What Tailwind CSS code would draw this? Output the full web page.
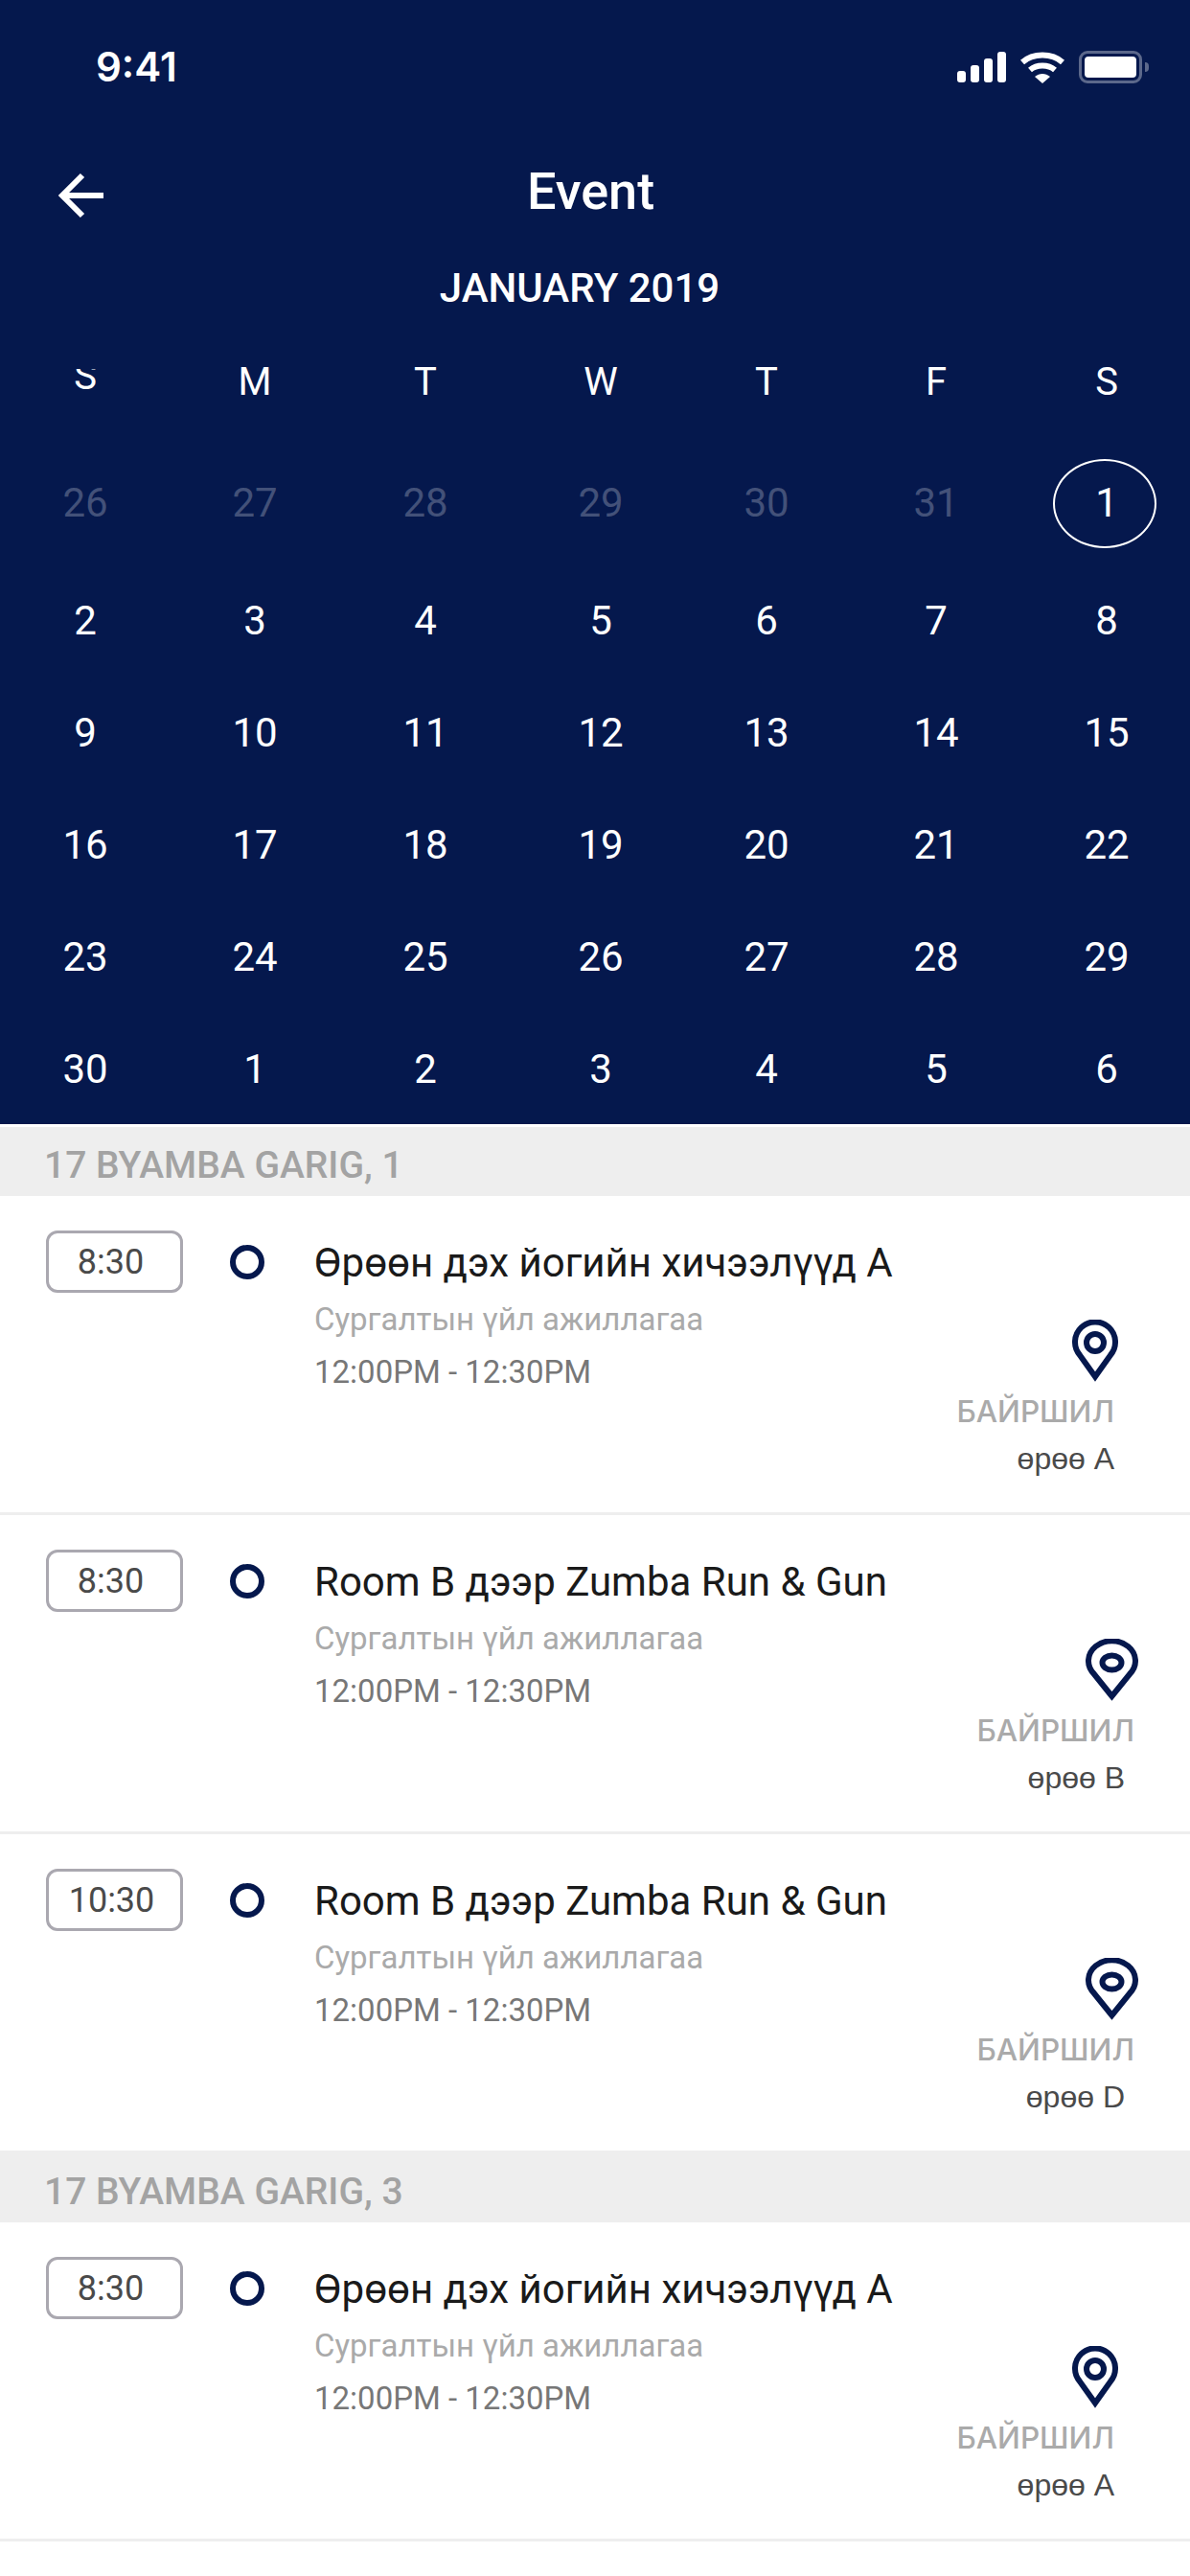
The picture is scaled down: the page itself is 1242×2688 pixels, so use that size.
<!DOCTYPE html>
<html lang="en">
<head>
    <meta charset="UTF-8">
    <meta name="viewport" content="width=device-width, initial-scale=1.0">
    <title>Event</title>
    <script src="https://cdn.jsdelivr.net/npm/@tailwindcss/browser@4"></script>
</head>
<body class="bg-white font-['Roboto',sans-serif]">
<div class="w-[1242px] h-[2688px] overflow-hidden">
    <header class="bg-[#05184d] h-[1173px] text-white">
        <div class="flex items-center justify-between h-[140px] pl-[100px] pr-[43px]">
            <span class="text-[42px] font-semibold font-['Inter',sans-serif] leading-none">9:41</span>
            <div class="flex items-center gap-[15px]">
                <svg width="51" height="32" viewBox="0 0 51 32" fill="#fff"><rect x="0" y="20" width="9" height="12" rx="3"/><rect x="14" y="14" width="9" height="18" rx="3"/><rect x="28" y="7" width="9" height="25" rx="3"/><rect x="42" y="0" width="9" height="32" rx="3"/></svg>
                <svg width="46" height="33" viewBox="0 0 46 33" fill="none" stroke="#fff" stroke-width="6"><path d="M2 11 C13 1 33 1 44 11"/><path d="M10 19 C17 13 29 13 36 19"/><path d="M15 26 L23 33 L31 26 C26 22 20 22 15 26Z" fill="#fff" stroke="none"/></svg>
                <div class="flex items-center gap-[3px]">
                    <div class="w-[66px] h-[34px] rounded-[9px] border-[3px] border-white/35 p-[3px]"><div class="w-full h-full bg-white rounded-[4px]"></div></div>
                    <div class="w-[4px] h-[10px] bg-white/35 rounded-r-full"></div>
                </div>
            </div>
        </div>
        <div class="relative flex justify-center h-[140px] pt-[33px] pr-[9px]">
            <svg class="absolute left-[60px] top-[39px]" width="50" height="50" viewBox="0 0 50 50" fill="none" stroke="#fff" stroke-width="6"><path d="M26 4 L5 25 L26 46"/><path d="M5 25 H48"/></svg>
            <h1 class="text-[54px] font-medium leading-none">Event</h1>
        </div>
        <p class="text-center text-[42px] font-medium leading-none h-[105px] pr-[32px]">JANUARY 2019</p>
        <div class="grid grid-cols-[178px_176px_180px_186px_160px_194px_162px] text-center text-[40px] leading-[28px] h-[81px]">
            <div class="h-[28px] overflow-hidden"><div class="-translate-y-[6px]">S</div></div>
            <div>M</div>
            <div>T</div>
            <div>W</div>
            <div>T</div>
            <div>F</div>
            <div>S</div>
        </div>
        <div class="grid grid-cols-[178px_176px_180px_186px_160px_194px_162px] h-[123px] pb-[6px] text-center text-[42px] leading-none items-center">
            <div class="text-white/25">26</div><div class="text-white/25">27</div><div class="text-white/25">28</div><div class="text-white/25">29</div><div class="text-white/25">30</div><div class="text-white/25">31</div>
            <div class="relative"><span class="relative">1</span><span class="absolute left-[25px] top-[-25px] w-[108px] h-[93px] rounded-[50%] border-[2.5px] border-white"></span></div>
        </div>
        <div class="grid grid-cols-[178px_176px_180px_186px_160px_194px_162px] auto-rows-[117px] text-center text-[42px] leading-none items-center">
            <div>2</div><div>3</div><div>4</div><div>5</div><div>6</div><div>7</div><div>8</div>
            <div>9</div><div>10</div><div>11</div><div>12</div><div>13</div><div>14</div><div>15</div>
            <div>16</div><div>17</div><div>18</div><div>19</div><div>20</div><div>21</div><div>22</div>
            <div>23</div><div>24</div><div>25</div><div>26</div><div>27</div><div>28</div><div>29</div>
            <div>30</div><div>1</div><div>2</div><div>3</div><div>4</div><div>5</div><div>6</div>
        </div>
    </header>
    <div class="h-[3px]"></div>
    <div class="bg-[#eeeeee] h-[72px] pt-[21px] pl-[46px] text-[39px] leading-none font-medium text-[#a3a3a3]">17 BYAMBA GARIG, 1</div>
    <article class="relative h-[333px] border-b-[3px] border-[#eeeeee] flex items-start pt-[36px] pl-[48px]">
        <div class="w-[143px] h-[65px] rounded-[12px] border-[3px] border-[#aaa8b0] flex items-center justify-center pr-[8px] text-[36px] text-[#4a4a4a]">8:30</div>
        <div class="w-[36px] h-[36px] rounded-full border-[6px] border-[#05184d] ml-[49px] mt-[15px]"></div>
        <div class="ml-[52px]">
            <h2 class="text-[42px] leading-none text-[#1a1a1a] mt-[13px]">Өрөөн дэх йогийн хичээлүүд А</h2>
            <p class="text-[33px] leading-none text-[#aaaaaa] mt-[21px]">Сургалтын үйл ажиллагаа</p>
            <p class="text-[33px] leading-none text-[#777777] mt-[22px]">12:00PM - 12:30PM</p>
        </div>
        <div class="absolute right-[79px] top-[129px] flex flex-col items-end">
            <svg class="mr-[-4px]" width="48" height="65" viewBox="0 0 48 65" fill="none" stroke="#05184d" stroke-width="6"><path d="M24 59.5 L8 37 A21 21 0 1 1 40 37 Z"/><circle cx="24" cy="24" r="9"/></svg>
            <p class="text-[31.5px] leading-none font-medium text-[#aaaaaa] font-['Inter',sans-serif] mt-[15px]">БАЙРШИЛ</p>
            <p class="text-[32px] leading-none text-[#4a4a4a] font-['Liberation_Sans',sans-serif] mt-[17px]">өрөө А</p>
        </div>
    </article>
    <article class="relative h-[333px] border-b-[3px] border-[#eeeeee] flex items-start pt-[36px] pl-[48px]">
        <div class="w-[143px] h-[65px] rounded-[12px] border-[3px] border-[#aaa8b0] flex items-center justify-center pr-[8px] text-[36px] text-[#4a4a4a]">8:30</div>
        <div class="w-[36px] h-[36px] rounded-full border-[6px] border-[#05184d] ml-[49px] mt-[15px]"></div>
        <div class="ml-[52px]">
            <h2 class="text-[42px] leading-none text-[#1a1a1a] mt-[13px]">Room B дээр Zumba Run &amp; Gun</h2>
            <p class="text-[33px] leading-none text-[#aaaaaa] mt-[21px]">Сургалтын үйл ажиллагаа</p>
            <p class="text-[33px] leading-none text-[#777777] mt-[22px]">12:00PM - 12:30PM</p>
        </div>
        <div class="absolute right-[58px] top-[129px] flex flex-col items-end">
            <svg class="mr-[-4px]" width="55" height="65" viewBox="0 0 55 65" fill="none" stroke="#05184d" stroke-width="6"><path d="M27.5 60 L9 37 A24.5 21 0 1 1 46 37 Z"/><ellipse cx="27.5" cy="25" rx="10" ry="7.5"/></svg>
            <p class="text-[31.5px] leading-none font-medium text-[#aaaaaa] font-['Inter',sans-serif] mt-[15px]">БАЙРШИЛ</p>
            <p class="text-[32px] leading-none text-[#4a4a4a] font-['Liberation_Sans',sans-serif] mt-[17px] mr-[10px]">өрөө B</p>
        </div>
    </article>
    <article class="relative h-[330px] flex items-start pt-[36px] pl-[48px]">
        <div class="w-[143px] h-[65px] rounded-[12px] border-[3px] border-[#aaa8b0] flex items-center justify-center pr-[6px] text-[36px] text-[#4a4a4a]">10:30</div>
        <div class="w-[36px] h-[36px] rounded-full border-[6px] border-[#05184d] ml-[49px] mt-[15px]"></div>
        <div class="ml-[52px]">
            <h2 class="text-[42px] leading-none text-[#1a1a1a] mt-[13px]">Room B дээр Zumba Run &amp; Gun</h2>
            <p class="text-[33px] leading-none text-[#aaaaaa] mt-[21px]">Сургалтын үйл ажиллагаа</p>
            <p class="text-[33px] leading-none text-[#777777] mt-[22px]">12:00PM - 12:30PM</p>
        </div>
        <div class="absolute right-[58px] top-[129px] flex flex-col items-end">
            <svg class="mr-[-4px]" width="55" height="65" viewBox="0 0 55 65" fill="none" stroke="#05184d" stroke-width="6"><path d="M27.5 60 L9 37 A24.5 21 0 1 1 46 37 Z"/><ellipse cx="27.5" cy="25" rx="10" ry="7.5"/></svg>
            <p class="text-[31.5px] leading-none font-medium text-[#aaaaaa] font-['Inter',sans-serif] mt-[15px]">БАЙРШИЛ</p>
            <p class="text-[32px] leading-none text-[#4a4a4a] font-['Liberation_Sans',sans-serif] mt-[17px] mr-[10px]">өрөө D</p>
        </div>
    </article>
    <div class="bg-[#eeeeee] h-[75px] pt-[24px] pl-[46px] text-[39px] leading-none font-medium text-[#a3a3a3]">17 BYAMBA GARIG, 3</div>
    <article class="relative h-[333px] border-b-[3px] border-[#eeeeee] flex items-start pt-[36px] pl-[48px]">
        <div class="w-[143px] h-[65px] rounded-[12px] border-[3px] border-[#aaa8b0] flex items-center justify-center pr-[8px] text-[36px] text-[#4a4a4a]">8:30</div>
        <div class="w-[36px] h-[36px] rounded-full border-[6px] border-[#05184d] ml-[49px] mt-[15px]"></div>
        <div class="ml-[52px]">
            <h2 class="text-[42px] leading-none text-[#1a1a1a] mt-[13px]">Өрөөн дэх йогийн хичээлүүд А</h2>
            <p class="text-[33px] leading-none text-[#aaaaaa] mt-[21px]">Сургалтын үйл ажиллагаа</p>
            <p class="text-[33px] leading-none text-[#777777] mt-[22px]">12:00PM - 12:30PM</p>
        </div>
        <div class="absolute right-[79px] top-[129px] flex flex-col items-end">
            <svg class="mr-[-4px]" width="48" height="65" viewBox="0 0 48 65" fill="none" stroke="#05184d" stroke-width="6"><path d="M24 59.5 L8 37 A21 21 0 1 1 40 37 Z"/><circle cx="24" cy="24" r="9"/></svg>
            <p class="text-[31.5px] leading-none font-medium text-[#aaaaaa] font-['Inter',sans-serif] mt-[15px]">БАЙРШИЛ</p>
            <p class="text-[32px] leading-none text-[#4a4a4a] font-['Liberation_Sans',sans-serif] mt-[17px]">өрөө А</p>
        </div>
    </article>
</div>
</body>
</html>
